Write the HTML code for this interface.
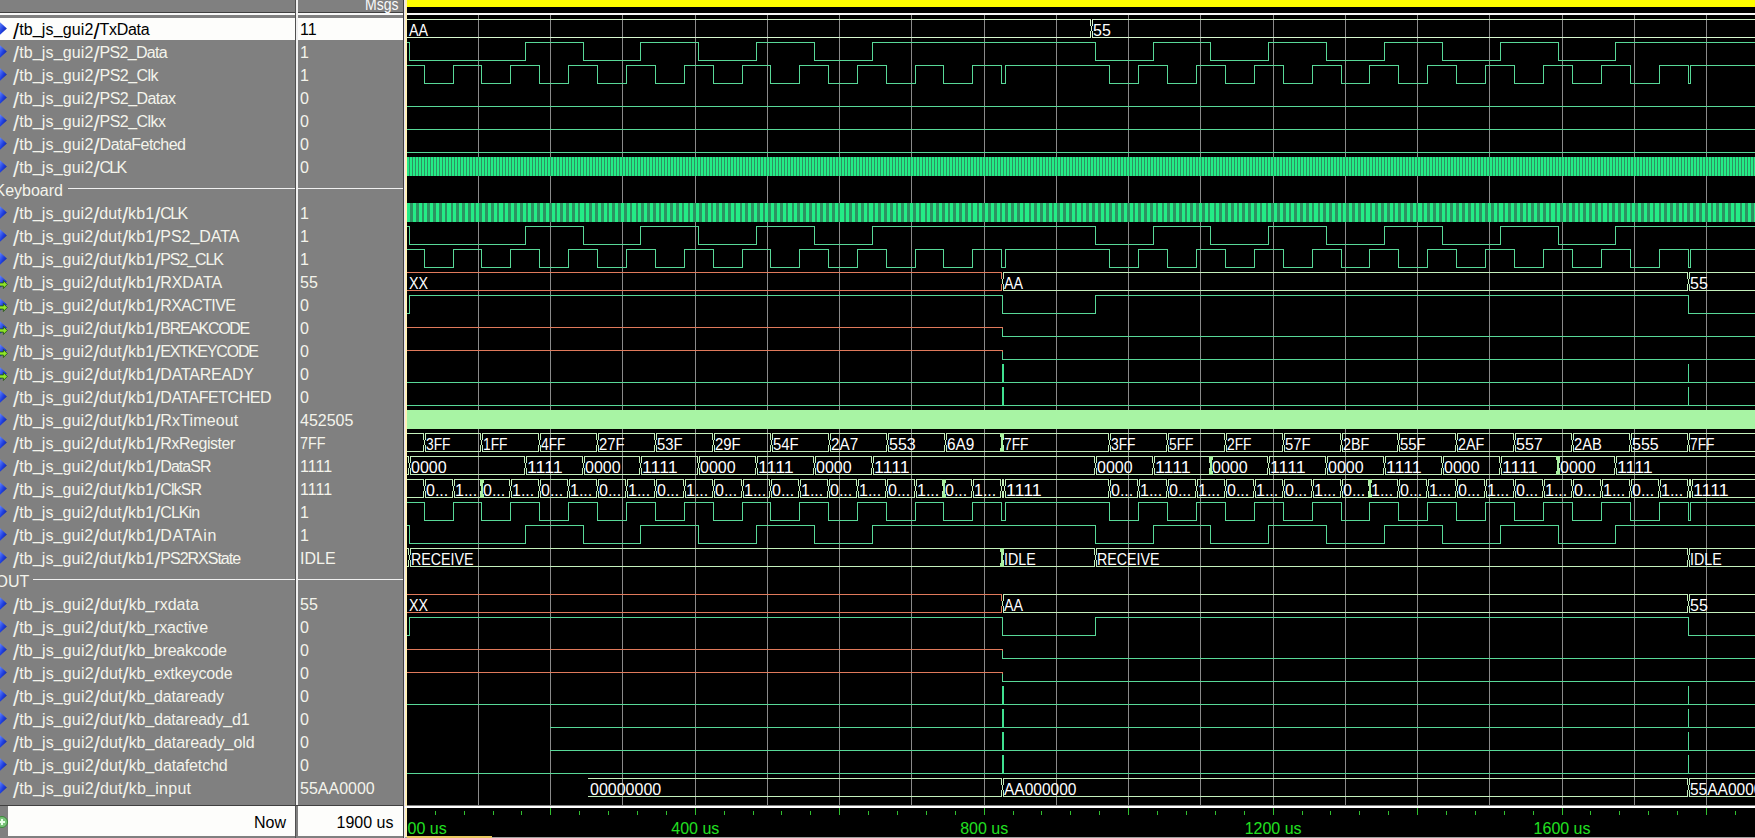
<!DOCTYPE html><html><head><meta charset="utf-8"><style>html,body{margin:0;padding:0;width:1755px;height:838px;overflow:hidden;background:#808080}svg{display:block}</style></head><body><svg width="1755" height="838" viewBox="0 0 1755 838" shape-rendering="crispEdges">
<defs>
<linearGradient id="dg" x1="0" y1="0" x2="1" y2="1"><stop offset="0" stop-color="#6a8cff"/><stop offset="0.5" stop-color="#1f3fe0"/><stop offset="1" stop-color="#0a1a80"/></linearGradient>
<pattern id="clk1" x="407" y="0" width="3" height="20" patternUnits="userSpaceOnUse"><rect width="3" height="20" fill="#2e9262"/><rect width="2" height="20" fill="#24ec86"/></pattern>
</defs>
<style>text{font-family:"Liberation Sans",sans-serif;font-size:16px}.nm{fill:#f4f4ec}.wl{fill:#ffffff}.vl{fill:#f4f4ec}</style>
<rect x="0" y="0" width="1755" height="838" fill="#808080"/>
<rect x="405" y="0" width="1350" height="805" fill="#000"/>
<rect x="405" y="806" width="1350" height="31" fill="#000"/>
<rect x="407" y="0" width="1348" height="7" fill="#ffff00"/>
<rect x="0" y="12" width="403" height="1" fill="#404040"/>
<rect x="0" y="13" width="1755" height="2" fill="#f8f8f8"/>
<text x="365" y="9.8" class="vl" style="fill:#fafafa" textLength="33.5" lengthAdjust="spacingAndGlyphs">Msgs</text>
<rect x="0" y="18" width="295" height="22" fill="#fdfdfb"/>
<rect x="298" y="18" width="105" height="22" fill="#fdfdfb"/>
<rect x="295" y="0" width="1" height="838" fill="#505050"/>
<rect x="296" y="0" width="2" height="805" fill="#f0f0f0"/>
<rect x="403" y="0" width="1" height="838" fill="#404040"/>
<rect x="404" y="0" width="1" height="838" fill="#e8e4f0"/>
<rect x="478" y="15" width="1" height="790" fill="#8a8a8a"/>
<rect x="550" y="15" width="1" height="790" fill="#8a8a8a"/>
<rect x="622" y="15" width="1" height="790" fill="#8a8a8a"/>
<rect x="695" y="15" width="1" height="790" fill="#8a8a8a"/>
<rect x="767" y="15" width="1" height="790" fill="#8a8a8a"/>
<rect x="839" y="15" width="1" height="790" fill="#8a8a8a"/>
<rect x="911" y="15" width="1" height="790" fill="#8a8a8a"/>
<rect x="984" y="15" width="1" height="790" fill="#8a8a8a"/>
<rect x="1056" y="15" width="1" height="790" fill="#8a8a8a"/>
<rect x="1128" y="15" width="1" height="790" fill="#8a8a8a"/>
<rect x="1200" y="15" width="1" height="790" fill="#8a8a8a"/>
<rect x="1273" y="15" width="1" height="790" fill="#8a8a8a"/>
<rect x="1345" y="15" width="1" height="790" fill="#8a8a8a"/>
<rect x="1417" y="15" width="1" height="790" fill="#8a8a8a"/>
<rect x="1489" y="15" width="1" height="790" fill="#8a8a8a"/>
<rect x="1562" y="15" width="1" height="790" fill="#8a8a8a"/>
<rect x="1634" y="15" width="1" height="790" fill="#8a8a8a"/>
<rect x="1706" y="15" width="1" height="790" fill="#8a8a8a"/>
<text x="13" y="34.8" class="nm" style="fill:#000" textLength="86.6" lengthAdjust="spacing"><tspan y="38.9" font-size="21.9">/</tspan><tspan y="34.8">tb</tspan><tspan y="33.8">_</tspan><tspan y="34.8">js</tspan><tspan y="33.8">_</tspan><tspan y="34.8">gui2</tspan><tspan y="38.9" font-size="21.9">/</tspan></text>
<text x="99.6" y="34.8" class="nm" style="fill:#000" textLength="50.0" lengthAdjust="spacing"><tspan y="34.8">TxData</tspan></text>
<text x="300" y="34.8" class="vl" style="fill:#000">11</text>
<path d="M-0.5 21.7L6.9 28.5L-0.5 35.3Z" fill="url(#dg)" shape-rendering="auto"/>
<text x="13" y="57.8" class="nm" style="fill:#f4f4ec" textLength="86.6" lengthAdjust="spacing"><tspan y="61.9" font-size="21.9">/</tspan><tspan y="57.8">tb</tspan><tspan y="56.8">_</tspan><tspan y="57.8">js</tspan><tspan y="56.8">_</tspan><tspan y="57.8">gui2</tspan><tspan y="61.9" font-size="21.9">/</tspan></text>
<text x="99.6" y="57.8" class="nm" style="fill:#f4f4ec" textLength="68.0" lengthAdjust="spacing"><tspan y="57.8">PS2</tspan><tspan y="56.8">_</tspan><tspan y="57.8">Data</tspan></text>
<text x="300" y="57.8" class="vl" style="fill:#f4f4ec">1</text>
<path d="M-0.5 44.7L6.9 51.5L-0.5 58.3Z" fill="url(#dg)" shape-rendering="auto"/>
<text x="13" y="80.8" class="nm" style="fill:#f4f4ec" textLength="86.6" lengthAdjust="spacing"><tspan y="84.89999999999999" font-size="21.9">/</tspan><tspan y="80.8">tb</tspan><tspan y="79.8">_</tspan><tspan y="80.8">js</tspan><tspan y="79.8">_</tspan><tspan y="80.8">gui2</tspan><tspan y="84.89999999999999" font-size="21.9">/</tspan></text>
<text x="99.6" y="80.8" class="nm" style="fill:#f4f4ec" textLength="58.9" lengthAdjust="spacing"><tspan y="80.8">PS2</tspan><tspan y="79.8">_</tspan><tspan y="80.8">Clk</tspan></text>
<text x="300" y="80.8" class="vl" style="fill:#f4f4ec">1</text>
<path d="M-0.5 67.7L6.9 74.5L-0.5 81.3Z" fill="url(#dg)" shape-rendering="auto"/>
<text x="13" y="103.8" class="nm" style="fill:#f4f4ec" textLength="86.6" lengthAdjust="spacing"><tspan y="107.89999999999999" font-size="21.9">/</tspan><tspan y="103.8">tb</tspan><tspan y="102.8">_</tspan><tspan y="103.8">js</tspan><tspan y="102.8">_</tspan><tspan y="103.8">gui2</tspan><tspan y="107.89999999999999" font-size="21.9">/</tspan></text>
<text x="99.6" y="103.8" class="nm" style="fill:#f4f4ec" textLength="76.4" lengthAdjust="spacing"><tspan y="103.8">PS2</tspan><tspan y="102.8">_</tspan><tspan y="103.8">Datax</tspan></text>
<text x="300" y="103.8" class="vl" style="fill:#f4f4ec">0</text>
<path d="M-0.5 90.7L6.9 97.5L-0.5 104.3Z" fill="url(#dg)" shape-rendering="auto"/>
<text x="13" y="126.8" class="nm" style="fill:#f4f4ec" textLength="86.6" lengthAdjust="spacing"><tspan y="130.9" font-size="21.9">/</tspan><tspan y="126.8">tb</tspan><tspan y="125.8">_</tspan><tspan y="126.8">js</tspan><tspan y="125.8">_</tspan><tspan y="126.8">gui2</tspan><tspan y="130.9" font-size="21.9">/</tspan></text>
<text x="99.6" y="126.8" class="nm" style="fill:#f4f4ec" textLength="66.4" lengthAdjust="spacing"><tspan y="126.8">PS2</tspan><tspan y="125.8">_</tspan><tspan y="126.8">Clkx</tspan></text>
<text x="300" y="126.8" class="vl" style="fill:#f4f4ec">0</text>
<path d="M-0.5 113.7L6.9 120.5L-0.5 127.3Z" fill="url(#dg)" shape-rendering="auto"/>
<text x="13" y="149.8" class="nm" style="fill:#f4f4ec" textLength="86.6" lengthAdjust="spacing"><tspan y="153.9" font-size="21.9">/</tspan><tspan y="149.8">tb</tspan><tspan y="148.8">_</tspan><tspan y="149.8">js</tspan><tspan y="148.8">_</tspan><tspan y="149.8">gui2</tspan><tspan y="153.9" font-size="21.9">/</tspan></text>
<text x="99.6" y="149.8" class="nm" style="fill:#f4f4ec" textLength="86.4" lengthAdjust="spacing"><tspan y="149.8">DataFetched</tspan></text>
<text x="300" y="149.8" class="vl" style="fill:#f4f4ec">0</text>
<path d="M-0.5 136.7L6.9 143.5L-0.5 150.3Z" fill="url(#dg)" shape-rendering="auto"/>
<text x="13" y="172.8" class="nm" style="fill:#f4f4ec" textLength="86.6" lengthAdjust="spacing"><tspan y="176.9" font-size="21.9">/</tspan><tspan y="172.8">tb</tspan><tspan y="171.8">_</tspan><tspan y="172.8">js</tspan><tspan y="171.8">_</tspan><tspan y="172.8">gui2</tspan><tspan y="176.9" font-size="21.9">/</tspan></text>
<text x="99.6" y="172.8" class="nm" style="fill:#f4f4ec" textLength="27.5" lengthAdjust="spacing"><tspan y="172.8">CLK</tspan></text>
<text x="300" y="172.8" class="vl" style="fill:#f4f4ec">0</text>
<path d="M-0.5 159.7L6.9 166.5L-0.5 173.3Z" fill="url(#dg)" shape-rendering="auto"/>
<text x="-5.5" y="195.5" class="nm">Keyboard</text>
<rect x="68" y="188" width="227" height="1" fill="#f0f0f0"/>
<rect x="298" y="188" width="105" height="1" fill="#f0f0f0"/>
<text x="13" y="218.8" class="nm" style="fill:#f4f4ec" textLength="147.3" lengthAdjust="spacing"><tspan y="222.9" font-size="21.9">/</tspan><tspan y="218.8">tb</tspan><tspan y="217.8">_</tspan><tspan y="218.8">js</tspan><tspan y="217.8">_</tspan><tspan y="218.8">gui2</tspan><tspan y="222.9" font-size="21.9">/</tspan><tspan y="218.8">dut</tspan><tspan y="222.9" font-size="21.9">/</tspan><tspan y="218.8">kb1</tspan><tspan y="222.9" font-size="21.9">/</tspan></text>
<text x="160.3" y="218.8" class="nm" style="fill:#f4f4ec" textLength="27.8" lengthAdjust="spacing"><tspan y="218.8">CLK</tspan></text>
<text x="300" y="218.8" class="vl" style="fill:#f4f4ec">1</text>
<path d="M-0.5 205.7L6.9 212.5L-0.5 219.3Z" fill="url(#dg)" shape-rendering="auto"/>
<text x="13" y="241.8" class="nm" style="fill:#f4f4ec" textLength="147.3" lengthAdjust="spacing"><tspan y="245.9" font-size="21.9">/</tspan><tspan y="241.8">tb</tspan><tspan y="240.8">_</tspan><tspan y="241.8">js</tspan><tspan y="240.8">_</tspan><tspan y="241.8">gui2</tspan><tspan y="245.9" font-size="21.9">/</tspan><tspan y="241.8">dut</tspan><tspan y="245.9" font-size="21.9">/</tspan><tspan y="241.8">kb1</tspan><tspan y="245.9" font-size="21.9">/</tspan></text>
<text x="160.3" y="241.8" class="nm" style="fill:#f4f4ec" textLength="79.1" lengthAdjust="spacing"><tspan y="241.8">PS2</tspan><tspan y="240.8">_</tspan><tspan y="241.8">DATA</tspan></text>
<text x="300" y="241.8" class="vl" style="fill:#f4f4ec">1</text>
<path d="M-0.5 228.7L6.9 235.5L-0.5 242.3Z" fill="url(#dg)" shape-rendering="auto"/>
<text x="13" y="264.8" class="nm" style="fill:#f4f4ec" textLength="147.3" lengthAdjust="spacing"><tspan y="268.90000000000003" font-size="21.9">/</tspan><tspan y="264.8">tb</tspan><tspan y="263.8">_</tspan><tspan y="264.8">js</tspan><tspan y="263.8">_</tspan><tspan y="264.8">gui2</tspan><tspan y="268.90000000000003" font-size="21.9">/</tspan><tspan y="264.8">dut</tspan><tspan y="268.90000000000003" font-size="21.9">/</tspan><tspan y="264.8">kb1</tspan><tspan y="268.90000000000003" font-size="21.9">/</tspan></text>
<text x="160.3" y="264.8" class="nm" style="fill:#f4f4ec" textLength="63.6" lengthAdjust="spacing"><tspan y="264.8">PS2</tspan><tspan y="263.8">_</tspan><tspan y="264.8">CLK</tspan></text>
<text x="300" y="264.8" class="vl" style="fill:#f4f4ec">1</text>
<path d="M-0.5 251.7L6.9 258.5L-0.5 265.3Z" fill="url(#dg)" shape-rendering="auto"/>
<text x="13" y="287.8" class="nm" style="fill:#f4f4ec" textLength="147.3" lengthAdjust="spacing"><tspan y="291.90000000000003" font-size="21.9">/</tspan><tspan y="287.8">tb</tspan><tspan y="286.8">_</tspan><tspan y="287.8">js</tspan><tspan y="286.8">_</tspan><tspan y="287.8">gui2</tspan><tspan y="291.90000000000003" font-size="21.9">/</tspan><tspan y="287.8">dut</tspan><tspan y="291.90000000000003" font-size="21.9">/</tspan><tspan y="287.8">kb1</tspan><tspan y="291.90000000000003" font-size="21.9">/</tspan></text>
<text x="160.3" y="287.8" class="nm" style="fill:#f4f4ec" textLength="61.8" lengthAdjust="spacing"><tspan y="287.8">RXDATA</tspan></text>
<text x="300" y="287.8" class="vl" style="fill:#f4f4ec">55</text>
<path d="M-0.5 274.7L6.9 281.5L-0.5 288.3Z" fill="url(#dg)" shape-rendering="auto"/>
<path d="M-1 282.9H3.4V280.5L7.3 284.5L3.4 288.5V286.1H-1Z" fill="#8ee428" stroke="#1d5010" stroke-width="0.8" shape-rendering="auto"/>
<text x="13" y="310.8" class="nm" style="fill:#f4f4ec" textLength="147.3" lengthAdjust="spacing"><tspan y="314.90000000000003" font-size="21.9">/</tspan><tspan y="310.8">tb</tspan><tspan y="309.8">_</tspan><tspan y="310.8">js</tspan><tspan y="309.8">_</tspan><tspan y="310.8">gui2</tspan><tspan y="314.90000000000003" font-size="21.9">/</tspan><tspan y="310.8">dut</tspan><tspan y="314.90000000000003" font-size="21.9">/</tspan><tspan y="310.8">kb1</tspan><tspan y="314.90000000000003" font-size="21.9">/</tspan></text>
<text x="160.3" y="310.8" class="nm" style="fill:#f4f4ec" textLength="75.6" lengthAdjust="spacing"><tspan y="310.8">RXACTIVE</tspan></text>
<text x="300" y="310.8" class="vl" style="fill:#f4f4ec">0</text>
<path d="M-0.5 297.7L6.9 304.5L-0.5 311.3Z" fill="url(#dg)" shape-rendering="auto"/>
<path d="M-1 305.9H3.4V303.5L7.3 307.5L3.4 311.5V309.1H-1Z" fill="#8ee428" stroke="#1d5010" stroke-width="0.8" shape-rendering="auto"/>
<text x="13" y="333.8" class="nm" style="fill:#f4f4ec" textLength="147.3" lengthAdjust="spacing"><tspan y="337.90000000000003" font-size="21.9">/</tspan><tspan y="333.8">tb</tspan><tspan y="332.8">_</tspan><tspan y="333.8">js</tspan><tspan y="332.8">_</tspan><tspan y="333.8">gui2</tspan><tspan y="337.90000000000003" font-size="21.9">/</tspan><tspan y="333.8">dut</tspan><tspan y="337.90000000000003" font-size="21.9">/</tspan><tspan y="333.8">kb1</tspan><tspan y="337.90000000000003" font-size="21.9">/</tspan></text>
<text x="160.3" y="333.8" class="nm" style="fill:#f4f4ec" textLength="89.9" lengthAdjust="spacing"><tspan y="333.8">BREAKCODE</tspan></text>
<text x="300" y="333.8" class="vl" style="fill:#f4f4ec">0</text>
<path d="M-0.5 320.7L6.9 327.5L-0.5 334.3Z" fill="url(#dg)" shape-rendering="auto"/>
<path d="M-1 328.9H3.4V326.5L7.3 330.5L3.4 334.5V332.1H-1Z" fill="#8ee428" stroke="#1d5010" stroke-width="0.8" shape-rendering="auto"/>
<text x="13" y="356.8" class="nm" style="fill:#f4f4ec" textLength="147.3" lengthAdjust="spacing"><tspan y="360.90000000000003" font-size="21.9">/</tspan><tspan y="356.8">tb</tspan><tspan y="355.8">_</tspan><tspan y="356.8">js</tspan><tspan y="355.8">_</tspan><tspan y="356.8">gui2</tspan><tspan y="360.90000000000003" font-size="21.9">/</tspan><tspan y="356.8">dut</tspan><tspan y="360.90000000000003" font-size="21.9">/</tspan><tspan y="356.8">kb1</tspan><tspan y="360.90000000000003" font-size="21.9">/</tspan></text>
<text x="160.3" y="356.8" class="nm" style="fill:#f4f4ec" textLength="98.7" lengthAdjust="spacing"><tspan y="356.8">EXTKEYCODE</tspan></text>
<text x="300" y="356.8" class="vl" style="fill:#f4f4ec">0</text>
<path d="M-0.5 343.7L6.9 350.5L-0.5 357.3Z" fill="url(#dg)" shape-rendering="auto"/>
<path d="M-1 351.9H3.4V349.5L7.3 353.5L3.4 357.5V355.1H-1Z" fill="#8ee428" stroke="#1d5010" stroke-width="0.8" shape-rendering="auto"/>
<text x="13" y="379.8" class="nm" style="fill:#f4f4ec" textLength="147.3" lengthAdjust="spacing"><tspan y="383.90000000000003" font-size="21.9">/</tspan><tspan y="379.8">tb</tspan><tspan y="378.8">_</tspan><tspan y="379.8">js</tspan><tspan y="378.8">_</tspan><tspan y="379.8">gui2</tspan><tspan y="383.90000000000003" font-size="21.9">/</tspan><tspan y="379.8">dut</tspan><tspan y="383.90000000000003" font-size="21.9">/</tspan><tspan y="379.8">kb1</tspan><tspan y="383.90000000000003" font-size="21.9">/</tspan></text>
<text x="160.3" y="379.8" class="nm" style="fill:#f4f4ec" textLength="93.7" lengthAdjust="spacing"><tspan y="379.8">DATAREADY</tspan></text>
<text x="300" y="379.8" class="vl" style="fill:#f4f4ec">0</text>
<path d="M-0.5 366.7L6.9 373.5L-0.5 380.3Z" fill="url(#dg)" shape-rendering="auto"/>
<path d="M-1 374.9H3.4V372.5L7.3 376.5L3.4 380.5V378.1H-1Z" fill="#8ee428" stroke="#1d5010" stroke-width="0.8" shape-rendering="auto"/>
<text x="13" y="402.8" class="nm" style="fill:#f4f4ec" textLength="147.3" lengthAdjust="spacing"><tspan y="406.90000000000003" font-size="21.9">/</tspan><tspan y="402.8">tb</tspan><tspan y="401.8">_</tspan><tspan y="402.8">js</tspan><tspan y="401.8">_</tspan><tspan y="402.8">gui2</tspan><tspan y="406.90000000000003" font-size="21.9">/</tspan><tspan y="402.8">dut</tspan><tspan y="406.90000000000003" font-size="21.9">/</tspan><tspan y="402.8">kb1</tspan><tspan y="406.90000000000003" font-size="21.9">/</tspan></text>
<text x="160.3" y="402.8" class="nm" style="fill:#f4f4ec" textLength="111.2" lengthAdjust="spacing"><tspan y="402.8">DATAFETCHED</tspan></text>
<text x="300" y="402.8" class="vl" style="fill:#f4f4ec">0</text>
<path d="M-0.5 389.7L6.9 396.5L-0.5 403.3Z" fill="url(#dg)" shape-rendering="auto"/>
<text x="13" y="425.8" class="nm" style="fill:#f4f4ec" textLength="147.3" lengthAdjust="spacing"><tspan y="429.90000000000003" font-size="21.9">/</tspan><tspan y="425.8">tb</tspan><tspan y="424.8">_</tspan><tspan y="425.8">js</tspan><tspan y="424.8">_</tspan><tspan y="425.8">gui2</tspan><tspan y="429.90000000000003" font-size="21.9">/</tspan><tspan y="425.8">dut</tspan><tspan y="429.90000000000003" font-size="21.9">/</tspan><tspan y="425.8">kb1</tspan><tspan y="429.90000000000003" font-size="21.9">/</tspan></text>
<text x="160.3" y="425.8" class="nm" style="fill:#f4f4ec" textLength="78.0" lengthAdjust="spacing"><tspan y="425.8">RxTimeout</tspan></text>
<text x="300" y="425.8" class="vl" style="fill:#f4f4ec">452505</text>
<path d="M-0.5 412.7L6.9 419.5L-0.5 426.3Z" fill="url(#dg)" shape-rendering="auto"/>
<text x="13" y="448.8" class="nm" style="fill:#f4f4ec" textLength="147.3" lengthAdjust="spacing"><tspan y="452.90000000000003" font-size="21.9">/</tspan><tspan y="448.8">tb</tspan><tspan y="447.8">_</tspan><tspan y="448.8">js</tspan><tspan y="447.8">_</tspan><tspan y="448.8">gui2</tspan><tspan y="452.90000000000003" font-size="21.9">/</tspan><tspan y="448.8">dut</tspan><tspan y="452.90000000000003" font-size="21.9">/</tspan><tspan y="448.8">kb1</tspan><tspan y="452.90000000000003" font-size="21.9">/</tspan></text>
<text x="160.3" y="448.8" class="nm" style="fill:#f4f4ec" textLength="75.1" lengthAdjust="spacing"><tspan y="448.8">RxRegister</tspan></text>
<text x="300" y="448.8" class="vl" style="fill:#f4f4ec" textLength="25.5" lengthAdjust="spacingAndGlyphs">7FF</text>
<path d="M-0.5 435.7L6.9 442.5L-0.5 449.3Z" fill="url(#dg)" shape-rendering="auto"/>
<text x="13" y="471.8" class="nm" style="fill:#f4f4ec" textLength="147.3" lengthAdjust="spacing"><tspan y="475.90000000000003" font-size="21.9">/</tspan><tspan y="471.8">tb</tspan><tspan y="470.8">_</tspan><tspan y="471.8">js</tspan><tspan y="470.8">_</tspan><tspan y="471.8">gui2</tspan><tspan y="475.90000000000003" font-size="21.9">/</tspan><tspan y="471.8">dut</tspan><tspan y="475.90000000000003" font-size="21.9">/</tspan><tspan y="471.8">kb1</tspan><tspan y="475.90000000000003" font-size="21.9">/</tspan></text>
<text x="160.3" y="471.8" class="nm" style="fill:#f4f4ec" textLength="51.3" lengthAdjust="spacing"><tspan y="471.8">DataSR</tspan></text>
<text x="300" y="471.8" class="vl" style="fill:#f4f4ec">1111</text>
<path d="M-0.5 458.7L6.9 465.5L-0.5 472.3Z" fill="url(#dg)" shape-rendering="auto"/>
<text x="13" y="494.8" class="nm" style="fill:#f4f4ec" textLength="147.3" lengthAdjust="spacing"><tspan y="498.90000000000003" font-size="21.9">/</tspan><tspan y="494.8">tb</tspan><tspan y="493.8">_</tspan><tspan y="494.8">js</tspan><tspan y="493.8">_</tspan><tspan y="494.8">gui2</tspan><tspan y="498.90000000000003" font-size="21.9">/</tspan><tspan y="494.8">dut</tspan><tspan y="498.90000000000003" font-size="21.9">/</tspan><tspan y="494.8">kb1</tspan><tspan y="498.90000000000003" font-size="21.9">/</tspan></text>
<text x="160.3" y="494.8" class="nm" style="fill:#f4f4ec" textLength="41.7" lengthAdjust="spacing"><tspan y="494.8">ClkSR</tspan></text>
<text x="300" y="494.8" class="vl" style="fill:#f4f4ec">1111</text>
<path d="M-0.5 481.7L6.9 488.5L-0.5 495.3Z" fill="url(#dg)" shape-rendering="auto"/>
<text x="13" y="517.8" class="nm" style="fill:#f4f4ec" textLength="147.3" lengthAdjust="spacing"><tspan y="521.9" font-size="21.9">/</tspan><tspan y="517.8">tb</tspan><tspan y="516.8">_</tspan><tspan y="517.8">js</tspan><tspan y="516.8">_</tspan><tspan y="517.8">gui2</tspan><tspan y="521.9" font-size="21.9">/</tspan><tspan y="517.8">dut</tspan><tspan y="521.9" font-size="21.9">/</tspan><tspan y="517.8">kb1</tspan><tspan y="521.9" font-size="21.9">/</tspan></text>
<text x="160.3" y="517.8" class="nm" style="fill:#f4f4ec" textLength="39.8" lengthAdjust="spacing"><tspan y="517.8">CLKin</tspan></text>
<text x="300" y="517.8" class="vl" style="fill:#f4f4ec">1</text>
<path d="M-0.5 504.7L6.9 511.5L-0.5 518.3Z" fill="url(#dg)" shape-rendering="auto"/>
<text x="13" y="540.8" class="nm" style="fill:#f4f4ec" textLength="147.3" lengthAdjust="spacing"><tspan y="544.9" font-size="21.9">/</tspan><tspan y="540.8">tb</tspan><tspan y="539.8">_</tspan><tspan y="540.8">js</tspan><tspan y="539.8">_</tspan><tspan y="540.8">gui2</tspan><tspan y="544.9" font-size="21.9">/</tspan><tspan y="540.8">dut</tspan><tspan y="544.9" font-size="21.9">/</tspan><tspan y="540.8">kb1</tspan><tspan y="544.9" font-size="21.9">/</tspan></text>
<text x="160.3" y="540.8" class="nm" style="fill:#f4f4ec" textLength="56.0" lengthAdjust="spacing"><tspan y="540.8">DATAin</tspan></text>
<text x="300" y="540.8" class="vl" style="fill:#f4f4ec">1</text>
<path d="M-0.5 527.7L6.9 534.5L-0.5 541.3Z" fill="url(#dg)" shape-rendering="auto"/>
<text x="13" y="563.8" class="nm" style="fill:#f4f4ec" textLength="147.3" lengthAdjust="spacing"><tspan y="567.9" font-size="21.9">/</tspan><tspan y="563.8">tb</tspan><tspan y="562.8">_</tspan><tspan y="563.8">js</tspan><tspan y="562.8">_</tspan><tspan y="563.8">gui2</tspan><tspan y="567.9" font-size="21.9">/</tspan><tspan y="563.8">dut</tspan><tspan y="567.9" font-size="21.9">/</tspan><tspan y="563.8">kb1</tspan><tspan y="567.9" font-size="21.9">/</tspan></text>
<text x="160.3" y="563.8" class="nm" style="fill:#f4f4ec" textLength="80.8" lengthAdjust="spacing"><tspan y="563.8">PS2RXState</tspan></text>
<text x="300" y="563.8" class="vl" style="fill:#f4f4ec">IDLE</text>
<path d="M-0.5 550.7L6.9 557.5L-0.5 564.3Z" fill="url(#dg)" shape-rendering="auto"/>
<text x="-4.5" y="586.5" class="nm">OUT</text>
<rect x="33" y="579" width="262" height="1" fill="#f0f0f0"/>
<rect x="298" y="579" width="105" height="1" fill="#f0f0f0"/>
<text x="13" y="609.8" class="nm" style="fill:#f4f4ec" textLength="115.7" lengthAdjust="spacing"><tspan y="613.9" font-size="21.9">/</tspan><tspan y="609.8">tb</tspan><tspan y="608.8">_</tspan><tspan y="609.8">js</tspan><tspan y="608.8">_</tspan><tspan y="609.8">gui2</tspan><tspan y="613.9" font-size="21.9">/</tspan><tspan y="609.8">dut</tspan><tspan y="613.9" font-size="21.9">/</tspan></text>
<text x="128.7" y="609.8" class="nm" style="fill:#f4f4ec" textLength="70.1" lengthAdjust="spacing"><tspan y="609.8">kb</tspan><tspan y="608.8">_</tspan><tspan y="609.8">rxdata</tspan></text>
<text x="300" y="609.8" class="vl" style="fill:#f4f4ec">55</text>
<path d="M-0.5 596.7L6.9 603.5L-0.5 610.3Z" fill="url(#dg)" shape-rendering="auto"/>
<text x="13" y="632.8" class="nm" style="fill:#f4f4ec" textLength="115.7" lengthAdjust="spacing"><tspan y="636.9" font-size="21.9">/</tspan><tspan y="632.8">tb</tspan><tspan y="631.8">_</tspan><tspan y="632.8">js</tspan><tspan y="631.8">_</tspan><tspan y="632.8">gui2</tspan><tspan y="636.9" font-size="21.9">/</tspan><tspan y="632.8">dut</tspan><tspan y="636.9" font-size="21.9">/</tspan></text>
<text x="128.7" y="632.8" class="nm" style="fill:#f4f4ec" textLength="79.4" lengthAdjust="spacing"><tspan y="632.8">kb</tspan><tspan y="631.8">_</tspan><tspan y="632.8">rxactive</tspan></text>
<text x="300" y="632.8" class="vl" style="fill:#f4f4ec">0</text>
<path d="M-0.5 619.7L6.9 626.5L-0.5 633.3Z" fill="url(#dg)" shape-rendering="auto"/>
<text x="13" y="655.8" class="nm" style="fill:#f4f4ec" textLength="115.7" lengthAdjust="spacing"><tspan y="659.9" font-size="21.9">/</tspan><tspan y="655.8">tb</tspan><tspan y="654.8">_</tspan><tspan y="655.8">js</tspan><tspan y="654.8">_</tspan><tspan y="655.8">gui2</tspan><tspan y="659.9" font-size="21.9">/</tspan><tspan y="655.8">dut</tspan><tspan y="659.9" font-size="21.9">/</tspan></text>
<text x="128.7" y="655.8" class="nm" style="fill:#f4f4ec" textLength="98.2" lengthAdjust="spacing"><tspan y="655.8">kb</tspan><tspan y="654.8">_</tspan><tspan y="655.8">breakcode</tspan></text>
<text x="300" y="655.8" class="vl" style="fill:#f4f4ec">0</text>
<path d="M-0.5 642.7L6.9 649.5L-0.5 656.3Z" fill="url(#dg)" shape-rendering="auto"/>
<text x="13" y="678.8" class="nm" style="fill:#f4f4ec" textLength="115.7" lengthAdjust="spacing"><tspan y="682.9" font-size="21.9">/</tspan><tspan y="678.8">tb</tspan><tspan y="677.8">_</tspan><tspan y="678.8">js</tspan><tspan y="677.8">_</tspan><tspan y="678.8">gui2</tspan><tspan y="682.9" font-size="21.9">/</tspan><tspan y="678.8">dut</tspan><tspan y="682.9" font-size="21.9">/</tspan></text>
<text x="128.7" y="678.8" class="nm" style="fill:#f4f4ec" textLength="103.9" lengthAdjust="spacing"><tspan y="678.8">kb</tspan><tspan y="677.8">_</tspan><tspan y="678.8">extkeycode</tspan></text>
<text x="300" y="678.8" class="vl" style="fill:#f4f4ec">0</text>
<path d="M-0.5 665.7L6.9 672.5L-0.5 679.3Z" fill="url(#dg)" shape-rendering="auto"/>
<text x="13" y="701.8" class="nm" style="fill:#f4f4ec" textLength="115.7" lengthAdjust="spacing"><tspan y="705.9" font-size="21.9">/</tspan><tspan y="701.8">tb</tspan><tspan y="700.8">_</tspan><tspan y="701.8">js</tspan><tspan y="700.8">_</tspan><tspan y="701.8">gui2</tspan><tspan y="705.9" font-size="21.9">/</tspan><tspan y="701.8">dut</tspan><tspan y="705.9" font-size="21.9">/</tspan></text>
<text x="128.7" y="701.8" class="nm" style="fill:#f4f4ec" textLength="95.3" lengthAdjust="spacing"><tspan y="701.8">kb</tspan><tspan y="700.8">_</tspan><tspan y="701.8">dataready</tspan></text>
<text x="300" y="701.8" class="vl" style="fill:#f4f4ec">0</text>
<path d="M-0.5 688.7L6.9 695.5L-0.5 702.3Z" fill="url(#dg)" shape-rendering="auto"/>
<text x="13" y="724.8" class="nm" style="fill:#f4f4ec" textLength="115.7" lengthAdjust="spacing"><tspan y="728.9" font-size="21.9">/</tspan><tspan y="724.8">tb</tspan><tspan y="723.8">_</tspan><tspan y="724.8">js</tspan><tspan y="723.8">_</tspan><tspan y="724.8">gui2</tspan><tspan y="728.9" font-size="21.9">/</tspan><tspan y="724.8">dut</tspan><tspan y="728.9" font-size="21.9">/</tspan></text>
<text x="128.7" y="724.8" class="nm" style="fill:#f4f4ec" textLength="121.0" lengthAdjust="spacing"><tspan y="724.8">kb</tspan><tspan y="723.8">_</tspan><tspan y="724.8">dataready</tspan><tspan y="723.8">_</tspan><tspan y="724.8">d1</tspan></text>
<text x="300" y="724.8" class="vl" style="fill:#f4f4ec">0</text>
<path d="M-0.5 711.7L6.9 718.5L-0.5 725.3Z" fill="url(#dg)" shape-rendering="auto"/>
<text x="13" y="747.8" class="nm" style="fill:#f4f4ec" textLength="115.7" lengthAdjust="spacing"><tspan y="751.9" font-size="21.9">/</tspan><tspan y="747.8">tb</tspan><tspan y="746.8">_</tspan><tspan y="747.8">js</tspan><tspan y="746.8">_</tspan><tspan y="747.8">gui2</tspan><tspan y="751.9" font-size="21.9">/</tspan><tspan y="747.8">dut</tspan><tspan y="751.9" font-size="21.9">/</tspan></text>
<text x="128.7" y="747.8" class="nm" style="fill:#f4f4ec" textLength="125.9" lengthAdjust="spacing"><tspan y="747.8">kb</tspan><tspan y="746.8">_</tspan><tspan y="747.8">dataready</tspan><tspan y="746.8">_</tspan><tspan y="747.8">old</tspan></text>
<text x="300" y="747.8" class="vl" style="fill:#f4f4ec">0</text>
<path d="M-0.5 734.7L6.9 741.5L-0.5 748.3Z" fill="url(#dg)" shape-rendering="auto"/>
<text x="13" y="770.8" class="nm" style="fill:#f4f4ec" textLength="115.7" lengthAdjust="spacing"><tspan y="774.9" font-size="21.9">/</tspan><tspan y="770.8">tb</tspan><tspan y="769.8">_</tspan><tspan y="770.8">js</tspan><tspan y="769.8">_</tspan><tspan y="770.8">gui2</tspan><tspan y="774.9" font-size="21.9">/</tspan><tspan y="770.8">dut</tspan><tspan y="774.9" font-size="21.9">/</tspan></text>
<text x="128.7" y="770.8" class="nm" style="fill:#f4f4ec" textLength="99.0" lengthAdjust="spacing"><tspan y="770.8">kb</tspan><tspan y="769.8">_</tspan><tspan y="770.8">datafetchd</tspan></text>
<text x="300" y="770.8" class="vl" style="fill:#f4f4ec">0</text>
<path d="M-0.5 757.7L6.9 764.5L-0.5 771.3Z" fill="url(#dg)" shape-rendering="auto"/>
<text x="13" y="793.8" class="nm" style="fill:#f4f4ec" textLength="115.7" lengthAdjust="spacing"><tspan y="797.9" font-size="21.9">/</tspan><tspan y="793.8">tb</tspan><tspan y="792.8">_</tspan><tspan y="793.8">js</tspan><tspan y="792.8">_</tspan><tspan y="793.8">gui2</tspan><tspan y="797.9" font-size="21.9">/</tspan><tspan y="793.8">dut</tspan><tspan y="797.9" font-size="21.9">/</tspan></text>
<text x="128.7" y="793.8" class="nm" style="fill:#f4f4ec" textLength="62.3" lengthAdjust="spacing"><tspan y="793.8">kb</tspan><tspan y="792.8">_</tspan><tspan y="793.8">input</tspan></text>
<text x="300" y="793.8" class="vl" style="fill:#f4f4ec">55AA0000</text>
<path d="M-0.5 780.7L6.9 787.5L-0.5 794.3Z" fill="url(#dg)" shape-rendering="auto"/>
<path d="M407 19.5H1090.5V24L1091.5 28.5" stroke="#d8f8d0" fill="none"/><path d="M407 37.5H1090.5V33L1091.5 28.5" stroke="#d8f8d0" fill="none"/><text x="409" y="36" class="wl" textLength="19.00" lengthAdjust="spacingAndGlyphs">AA</text><path d="M1091.5 28.5L1092.5 24V19.5H1755" stroke="#d8f8d0" fill="none"/><path d="M1091.5 28.5L1092.5 33V37.5H1755" stroke="#d8f8d0" fill="none"/><text x="1093" y="36" class="wl" textLength="17.80" lengthAdjust="spacingAndGlyphs">55</text>
<path d="M407 42.5H409.5V60.5H525.5V42.5H583.5V60.5H640.5V42.5H698.5V60.5H756.5V42.5H814.5V60.5H872.5V42.5H1095.5V60.5H1153.5V42.5H1210.5V60.5H1268.5V42.5H1326.5V60.5H1384.5V42.5H1442.5V60.5H1500.5V42.5H1558.5V60.5H1615.5V42.5H1755" stroke="#58d898" fill="none" stroke-width="1"/>
<path d="M407 65.5H424.5V83.5H453.5V65.5H481.5V83.5H510.5V65.5H539.5V83.5H568.5V65.5H597.5V83.5H626.5V65.5H655.5V83.5H684.5V65.5H713.5V83.5H742.5V65.5H770.5V83.5H799.5V65.5H828.5V83.5H857.5V65.5H886.5V83.5H915.5V65.5H943.5V83.5H972.5V65.5H1001.5V83.5H1005.5V65.5H1109.5V83.5H1138.5V65.5H1167.5V83.5H1196.5V65.5H1225.5V83.5H1254.5V65.5H1283.5V83.5H1312.5V65.5H1341.5V83.5H1369.5V65.5H1398.5V83.5H1427.5V65.5H1456.5V83.5H1485.5V65.5H1514.5V83.5H1543.5V65.5H1572.5V83.5H1601.5V65.5H1630.5V83.5H1659.5V65.5H1688.5V83.5H1690.5V65.5H1755" stroke="#58d898" fill="none" stroke-width="1"/>
<path d="M407 106.5H1755" stroke="#58d898" stroke-width="1"/>
<path d="M407 129.5H1755" stroke="#58d898" stroke-width="1"/>
<path d="M407 152.5H1755" stroke="#58d898" stroke-width="1"/>
<rect x="407" y="157" width="1348" height="19" fill="url(#clk1)"/>
<rect x="407" y="203" width="1348" height="19" fill="#2e9262"/><path d="M407 203h3v19h-3ZM413 203h3v19h-3ZM419 203h3v19h-3ZM424 203h3v19h-3ZM430 203h3v19h-3ZM436 203h3v19h-3ZM442 203h3v19h-3ZM447 203h4v19h-4ZM453 203h3v19h-3ZM459 203h3v19h-3ZM465 203h3v19h-3ZM471 203h3v19h-3ZM476 203h3v19h-3ZM482 203h3v19h-3ZM488 203h3v19h-3ZM494 203h3v19h-3ZM499 203h4v19h-4ZM505 203h3v19h-3ZM511 203h3v19h-3ZM517 203h3v19h-3ZM523 203h3v19h-3ZM528 203h3v19h-3ZM534 203h3v19h-3ZM540 203h3v19h-3ZM546 203h3v19h-3ZM552 203h3v19h-3ZM557 203h3v19h-3ZM563 203h3v19h-3ZM569 203h3v19h-3ZM575 203h3v19h-3ZM580 203h4v19h-4ZM586 203h3v19h-3ZM592 203h3v19h-3ZM598 203h3v19h-3ZM604 203h3v19h-3ZM609 203h3v19h-3ZM615 203h3v19h-3ZM621 203h3v19h-3ZM627 203h3v19h-3ZM632 203h4v19h-4ZM638 203h3v19h-3ZM644 203h3v19h-3ZM650 203h3v19h-3ZM656 203h3v19h-3ZM661 203h3v19h-3ZM667 203h3v19h-3ZM673 203h3v19h-3ZM679 203h3v19h-3ZM684 203h4v19h-4ZM690 203h3v19h-3ZM696 203h3v19h-3ZM702 203h3v19h-3ZM708 203h3v19h-3ZM713 203h3v19h-3ZM719 203h3v19h-3ZM725 203h3v19h-3ZM731 203h3v19h-3ZM736 203h4v19h-4ZM742 203h3v19h-3ZM748 203h3v19h-3ZM754 203h3v19h-3ZM760 203h3v19h-3ZM765 203h3v19h-3ZM771 203h3v19h-3ZM777 203h3v19h-3ZM783 203h3v19h-3ZM788 203h4v19h-4ZM794 203h3v19h-3ZM800 203h3v19h-3ZM806 203h3v19h-3ZM812 203h3v19h-3ZM817 203h3v19h-3ZM823 203h3v19h-3ZM829 203h3v19h-3ZM835 203h3v19h-3ZM840 203h4v19h-4ZM846 203h3v19h-3ZM852 203h3v19h-3ZM858 203h3v19h-3ZM864 203h3v19h-3ZM869 203h4v19h-4ZM875 203h3v19h-3ZM881 203h3v19h-3ZM887 203h3v19h-3ZM893 203h3v19h-3ZM898 203h3v19h-3ZM904 203h3v19h-3ZM910 203h3v19h-3ZM916 203h3v19h-3ZM921 203h4v19h-4ZM927 203h3v19h-3ZM933 203h3v19h-3ZM939 203h3v19h-3ZM945 203h3v19h-3ZM950 203h3v19h-3ZM956 203h3v19h-3ZM962 203h3v19h-3ZM968 203h3v19h-3ZM973 203h4v19h-4ZM979 203h3v19h-3ZM985 203h3v19h-3ZM991 203h3v19h-3ZM997 203h3v19h-3ZM1002 203h3v19h-3ZM1008 203h3v19h-3ZM1014 203h3v19h-3ZM1020 203h3v19h-3ZM1025 203h4v19h-4ZM1031 203h3v19h-3ZM1037 203h3v19h-3ZM1043 203h3v19h-3ZM1049 203h3v19h-3ZM1054 203h3v19h-3ZM1060 203h3v19h-3ZM1066 203h3v19h-3ZM1072 203h3v19h-3ZM1077 203h4v19h-4ZM1083 203h3v19h-3ZM1089 203h3v19h-3ZM1095 203h3v19h-3ZM1101 203h3v19h-3ZM1106 203h3v19h-3ZM1112 203h3v19h-3ZM1118 203h3v19h-3ZM1124 203h3v19h-3ZM1130 203h3v19h-3ZM1135 203h3v19h-3ZM1141 203h3v19h-3ZM1147 203h3v19h-3ZM1153 203h3v19h-3ZM1158 203h4v19h-4ZM1164 203h3v19h-3ZM1170 203h3v19h-3ZM1176 203h3v19h-3ZM1182 203h3v19h-3ZM1187 203h3v19h-3ZM1193 203h3v19h-3ZM1199 203h3v19h-3ZM1205 203h3v19h-3ZM1210 203h4v19h-4ZM1216 203h3v19h-3ZM1222 203h3v19h-3ZM1228 203h3v19h-3ZM1234 203h3v19h-3ZM1239 203h3v19h-3ZM1245 203h3v19h-3ZM1251 203h3v19h-3ZM1257 203h3v19h-3ZM1262 203h4v19h-4ZM1268 203h3v19h-3ZM1274 203h3v19h-3ZM1280 203h3v19h-3ZM1286 203h3v19h-3ZM1291 203h3v19h-3ZM1297 203h3v19h-3ZM1303 203h3v19h-3ZM1309 203h3v19h-3ZM1314 203h4v19h-4ZM1320 203h3v19h-3ZM1326 203h3v19h-3ZM1332 203h3v19h-3ZM1338 203h3v19h-3ZM1343 203h3v19h-3ZM1349 203h3v19h-3ZM1355 203h3v19h-3ZM1361 203h3v19h-3ZM1366 203h4v19h-4ZM1372 203h3v19h-3ZM1378 203h3v19h-3ZM1384 203h3v19h-3ZM1390 203h3v19h-3ZM1395 203h3v19h-3ZM1401 203h3v19h-3ZM1407 203h3v19h-3ZM1413 203h3v19h-3ZM1418 203h4v19h-4ZM1424 203h3v19h-3ZM1430 203h3v19h-3ZM1436 203h3v19h-3ZM1442 203h3v19h-3ZM1447 203h3v19h-3ZM1453 203h3v19h-3ZM1459 203h3v19h-3ZM1465 203h3v19h-3ZM1471 203h3v19h-3ZM1476 203h3v19h-3ZM1482 203h3v19h-3ZM1488 203h3v19h-3ZM1494 203h3v19h-3ZM1499 203h4v19h-4ZM1505 203h3v19h-3ZM1511 203h3v19h-3ZM1517 203h3v19h-3ZM1523 203h3v19h-3ZM1528 203h3v19h-3ZM1534 203h3v19h-3ZM1540 203h3v19h-3ZM1546 203h3v19h-3ZM1551 203h4v19h-4ZM1557 203h3v19h-3ZM1563 203h3v19h-3ZM1569 203h3v19h-3ZM1575 203h3v19h-3ZM1580 203h3v19h-3ZM1586 203h3v19h-3ZM1592 203h3v19h-3ZM1598 203h3v19h-3ZM1603 203h4v19h-4ZM1609 203h3v19h-3ZM1615 203h3v19h-3ZM1621 203h3v19h-3ZM1627 203h3v19h-3ZM1632 203h3v19h-3ZM1638 203h3v19h-3ZM1644 203h3v19h-3ZM1650 203h3v19h-3ZM1655 203h4v19h-4ZM1661 203h3v19h-3ZM1667 203h3v19h-3ZM1673 203h3v19h-3ZM1679 203h3v19h-3ZM1684 203h3v19h-3ZM1690 203h3v19h-3ZM1696 203h3v19h-3ZM1702 203h3v19h-3ZM1708 203h3v19h-3ZM1713 203h3v19h-3ZM1719 203h3v19h-3ZM1725 203h3v19h-3ZM1731 203h3v19h-3ZM1736 203h4v19h-4ZM1742 203h3v19h-3ZM1748 203h3v19h-3ZM1754 203h3v19h-3Z" fill="#24ec86"/>
<path d="M407 226.5H409.5V244.5H525.5V226.5H583.5V244.5H640.5V226.5H698.5V244.5H756.5V226.5H814.5V244.5H872.5V226.5H1095.5V244.5H1153.5V226.5H1210.5V244.5H1268.5V226.5H1326.5V244.5H1384.5V226.5H1442.5V244.5H1500.5V226.5H1558.5V244.5H1615.5V226.5H1755" stroke="#58d898" fill="none" stroke-width="1"/>
<path d="M407 249.5H424.5V267.5H453.5V249.5H481.5V267.5H510.5V249.5H539.5V267.5H568.5V249.5H597.5V267.5H626.5V249.5H655.5V267.5H684.5V249.5H713.5V267.5H742.5V249.5H770.5V267.5H799.5V249.5H828.5V267.5H857.5V249.5H886.5V267.5H915.5V249.5H943.5V267.5H972.5V249.5H1001.5V267.5H1005.5V249.5H1109.5V267.5H1138.5V249.5H1167.5V267.5H1196.5V249.5H1225.5V267.5H1254.5V249.5H1283.5V267.5H1312.5V249.5H1341.5V267.5H1369.5V249.5H1398.5V267.5H1427.5V249.5H1456.5V267.5H1485.5V249.5H1514.5V267.5H1543.5V249.5H1572.5V267.5H1601.5V249.5H1630.5V267.5H1659.5V249.5H1688.5V267.5H1690.5V249.5H1755" stroke="#58d898" fill="none" stroke-width="1"/>
<path d="M407 272.5H1001.5V277L1002.5 281.5" stroke="#e07a5c" fill="none"/><path d="M407 290.5H1001.5V286L1002.5 281.5" stroke="#e07a5c" fill="none"/><text x="409" y="289" class="wl" textLength="19.00" lengthAdjust="spacingAndGlyphs">XX</text><path d="M1002.5 281.5L1003.5 277V272.5H1687.5V277L1688.5 281.5" stroke="#c4f0bc" fill="none"/><path d="M1002.5 281.5L1003.5 286V290.5H1687.5V286L1688.5 281.5" stroke="#c4f0bc" fill="none"/><text x="1004" y="289" class="wl" textLength="19.00" lengthAdjust="spacingAndGlyphs">AA</text><path d="M1688.5 281.5L1689.5 277V272.5H1755" stroke="#c4f0bc" fill="none"/><path d="M1688.5 281.5L1689.5 286V290.5H1755" stroke="#c4f0bc" fill="none"/><text x="1690" y="289" class="wl" textLength="17.80" lengthAdjust="spacingAndGlyphs">55</text>
<path d="M407 313.5H409.5V295.5H1002.5V313.5H1095.5V295.5H1688.5V313.5H1755" stroke="#58d898" fill="none" stroke-width="1"/>
<path d="M407 327.5H1002.5V336.5H1755" stroke="#e07a5c" fill="none"/><path d="M1002.5 329V336.5H1755" stroke="#58d898" fill="none"/>
<path d="M407 350.5H1002.5V359.5H1755" stroke="#e07a5c" fill="none"/><path d="M1002.5 352V359.5H1755" stroke="#58d898" fill="none"/>
<path d="M407 382.5H1755" stroke="#58d898" stroke-width="1"/><rect x="1002" y="364" width="2" height="19" fill="#40e090"/><rect x="1688" y="364" width="1" height="19" fill="#50d898"/>
<path d="M407 405.5H1755" stroke="#58d898" stroke-width="1"/><rect x="1002" y="387" width="2" height="19" fill="#40e090"/><rect x="1688" y="387" width="1" height="19" fill="#50d898"/>
<rect x="407" y="410" width="1348" height="19" fill="#a8f4a4"/>
<path d="M407 433.5H423.5V438L424.5 442.5" stroke="#c4f0bc" fill="none"/><path d="M407 451.5H423.5V447L424.5 442.5" stroke="#c4f0bc" fill="none"/><path d="M424.5 442.5L425.5 438V433.5H480.5V438L481.5 442.5" stroke="#c4f0bc" fill="none"/><path d="M424.5 442.5L425.5 447V451.5H480.5V447L481.5 442.5" stroke="#c4f0bc" fill="none"/><text x="426" y="450" class="wl" textLength="24.54" lengthAdjust="spacingAndGlyphs">3FF</text><path d="M481.5 442.5L482.5 438V433.5H538.5V438L539.5 442.5" stroke="#c4f0bc" fill="none"/><path d="M481.5 442.5L482.5 447V451.5H538.5V447L539.5 442.5" stroke="#c4f0bc" fill="none"/><text x="483" y="450" class="wl" textLength="24.54" lengthAdjust="spacingAndGlyphs">1FF</text><path d="M539.5 442.5L540.5 438V433.5H596.5V438L597.5 442.5" stroke="#c4f0bc" fill="none"/><path d="M539.5 442.5L540.5 447V451.5H596.5V447L597.5 442.5" stroke="#c4f0bc" fill="none"/><text x="541" y="450" class="wl" textLength="24.54" lengthAdjust="spacingAndGlyphs">4FF</text><path d="M597.5 442.5L598.5 438V433.5H654.5V438L655.5 442.5" stroke="#c4f0bc" fill="none"/><path d="M597.5 442.5L598.5 447V451.5H654.5V447L655.5 442.5" stroke="#c4f0bc" fill="none"/><text x="599" y="450" class="wl" textLength="25.62" lengthAdjust="spacingAndGlyphs">27F</text><path d="M655.5 442.5L656.5 438V433.5H712.5V438L713.5 442.5" stroke="#c4f0bc" fill="none"/><path d="M655.5 442.5L656.5 447V451.5H712.5V447L713.5 442.5" stroke="#c4f0bc" fill="none"/><text x="657" y="450" class="wl" textLength="25.62" lengthAdjust="spacingAndGlyphs">53F</text><path d="M713.5 442.5L714.5 438V433.5H770.5V438L771.5 442.5" stroke="#c4f0bc" fill="none"/><path d="M713.5 442.5L714.5 447V451.5H770.5V447L771.5 442.5" stroke="#c4f0bc" fill="none"/><text x="715" y="450" class="wl" textLength="25.62" lengthAdjust="spacingAndGlyphs">29F</text><path d="M771.5 442.5L772.5 438V433.5H828.5V438L829.5 442.5" stroke="#c4f0bc" fill="none"/><path d="M771.5 442.5L772.5 447V451.5H828.5V447L829.5 442.5" stroke="#c4f0bc" fill="none"/><text x="773" y="450" class="wl" textLength="25.62" lengthAdjust="spacingAndGlyphs">54F</text><path d="M829.5 442.5L830.5 438V433.5H886.5V438L887.5 442.5" stroke="#c4f0bc" fill="none"/><path d="M829.5 442.5L830.5 447V451.5H886.5V447L887.5 442.5" stroke="#c4f0bc" fill="none"/><text x="831" y="450" class="wl" textLength="27.29" lengthAdjust="spacingAndGlyphs">2A7</text><path d="M887.5 442.5L888.5 438V433.5H944.5V438L945.5 442.5" stroke="#c4f0bc" fill="none"/><path d="M887.5 442.5L888.5 447V451.5H944.5V447L945.5 442.5" stroke="#c4f0bc" fill="none"/><text x="889" y="450" class="wl" textLength="26.70" lengthAdjust="spacingAndGlyphs">553</text><path d="M945.5 442.5L946.5 438V433.5H1001.5V438L1002.5 442.5" stroke="#c4f0bc" fill="none"/><path d="M945.5 442.5L946.5 447V451.5H1001.5V447L1002.5 442.5" stroke="#c4f0bc" fill="none"/><text x="947" y="450" class="wl" textLength="27.29" lengthAdjust="spacingAndGlyphs">6A9</text><path d="M1002.5 442.5L1003.5 438V433.5H1108.5V438L1109.5 442.5" stroke="#c4f0bc" fill="none"/><path d="M1002.5 442.5L1003.5 447V451.5H1108.5V447L1109.5 442.5" stroke="#c4f0bc" fill="none"/><text x="1004" y="450" class="wl" textLength="24.54" lengthAdjust="spacingAndGlyphs">7FF</text><path d="M1109.5 442.5L1110.5 438V433.5H1166.5V438L1167.5 442.5" stroke="#c4f0bc" fill="none"/><path d="M1109.5 442.5L1110.5 447V451.5H1166.5V447L1167.5 442.5" stroke="#c4f0bc" fill="none"/><text x="1111" y="450" class="wl" textLength="24.54" lengthAdjust="spacingAndGlyphs">3FF</text><path d="M1167.5 442.5L1168.5 438V433.5H1224.5V438L1225.5 442.5" stroke="#c4f0bc" fill="none"/><path d="M1167.5 442.5L1168.5 447V451.5H1224.5V447L1225.5 442.5" stroke="#c4f0bc" fill="none"/><text x="1169" y="450" class="wl" textLength="24.54" lengthAdjust="spacingAndGlyphs">5FF</text><path d="M1225.5 442.5L1226.5 438V433.5H1282.5V438L1283.5 442.5" stroke="#c4f0bc" fill="none"/><path d="M1225.5 442.5L1226.5 447V451.5H1282.5V447L1283.5 442.5" stroke="#c4f0bc" fill="none"/><text x="1227" y="450" class="wl" textLength="24.54" lengthAdjust="spacingAndGlyphs">2FF</text><path d="M1283.5 442.5L1284.5 438V433.5H1340.5V438L1341.5 442.5" stroke="#c4f0bc" fill="none"/><path d="M1283.5 442.5L1284.5 447V451.5H1340.5V447L1341.5 442.5" stroke="#c4f0bc" fill="none"/><text x="1285" y="450" class="wl" textLength="25.62" lengthAdjust="spacingAndGlyphs">57F</text><path d="M1341.5 442.5L1342.5 438V433.5H1397.5V438L1398.5 442.5" stroke="#c4f0bc" fill="none"/><path d="M1341.5 442.5L1342.5 447V451.5H1397.5V447L1398.5 442.5" stroke="#c4f0bc" fill="none"/><text x="1343" y="450" class="wl" textLength="26.22" lengthAdjust="spacingAndGlyphs">2BF</text><path d="M1398.5 442.5L1399.5 438V433.5H1455.5V438L1456.5 442.5" stroke="#c4f0bc" fill="none"/><path d="M1398.5 442.5L1399.5 447V451.5H1455.5V447L1456.5 442.5" stroke="#c4f0bc" fill="none"/><text x="1400" y="450" class="wl" textLength="25.62" lengthAdjust="spacingAndGlyphs">55F</text><path d="M1456.5 442.5L1457.5 438V433.5H1513.5V438L1514.5 442.5" stroke="#c4f0bc" fill="none"/><path d="M1456.5 442.5L1457.5 447V451.5H1513.5V447L1514.5 442.5" stroke="#c4f0bc" fill="none"/><text x="1458" y="450" class="wl" textLength="26.22" lengthAdjust="spacingAndGlyphs">2AF</text><path d="M1514.5 442.5L1515.5 438V433.5H1571.5V438L1572.5 442.5" stroke="#c4f0bc" fill="none"/><path d="M1514.5 442.5L1515.5 447V451.5H1571.5V447L1572.5 442.5" stroke="#c4f0bc" fill="none"/><text x="1516" y="450" class="wl" textLength="26.70" lengthAdjust="spacingAndGlyphs">557</text><path d="M1572.5 442.5L1573.5 438V433.5H1629.5V438L1630.5 442.5" stroke="#c4f0bc" fill="none"/><path d="M1572.5 442.5L1573.5 447V451.5H1629.5V447L1630.5 442.5" stroke="#c4f0bc" fill="none"/><text x="1574" y="450" class="wl" textLength="27.89" lengthAdjust="spacingAndGlyphs">2AB</text><path d="M1630.5 442.5L1631.5 438V433.5H1687.5V438L1688.5 442.5" stroke="#c4f0bc" fill="none"/><path d="M1630.5 442.5L1631.5 447V451.5H1687.5V447L1688.5 442.5" stroke="#c4f0bc" fill="none"/><text x="1632" y="450" class="wl" textLength="26.70" lengthAdjust="spacingAndGlyphs">555</text><path d="M1688.5 442.5L1689.5 438V433.5H1755" stroke="#c4f0bc" fill="none"/><path d="M1688.5 442.5L1689.5 447V451.5H1755" stroke="#c4f0bc" fill="none"/><text x="1690" y="450" class="wl" textLength="24.54" lengthAdjust="spacingAndGlyphs">7FF</text>
<path d="M407 456.5H408.5V461L409.5 465.5" stroke="#c4f0bc" fill="none"/><path d="M407 474.5H408.5V470L409.5 465.5" stroke="#c4f0bc" fill="none"/><path d="M409.5 465.5L410.5 461V456.5H524.5V461L525.5 465.5" stroke="#c4f0bc" fill="none"/><path d="M409.5 465.5L410.5 470V474.5H524.5V470L525.5 465.5" stroke="#c4f0bc" fill="none"/><text x="411" y="473" class="wl" textLength="35.59" lengthAdjust="spacingAndGlyphs">0000</text><path d="M525.5 465.5L526.5 461V456.5H582.5V461L583.5 465.5" stroke="#c4f0bc" fill="none"/><path d="M525.5 465.5L526.5 470V474.5H582.5V470L583.5 465.5" stroke="#c4f0bc" fill="none"/><text x="527" y="473" class="wl" textLength="35.59" lengthAdjust="spacingAndGlyphs">1111</text><path d="M583.5 465.5L584.5 461V456.5H639.5V461L640.5 465.5" stroke="#c4f0bc" fill="none"/><path d="M583.5 465.5L584.5 470V474.5H639.5V470L640.5 465.5" stroke="#c4f0bc" fill="none"/><text x="585" y="473" class="wl" textLength="35.59" lengthAdjust="spacingAndGlyphs">0000</text><path d="M640.5 465.5L641.5 461V456.5H697.5V461L698.5 465.5" stroke="#c4f0bc" fill="none"/><path d="M640.5 465.5L641.5 470V474.5H697.5V470L698.5 465.5" stroke="#c4f0bc" fill="none"/><text x="642" y="473" class="wl" textLength="35.59" lengthAdjust="spacingAndGlyphs">1111</text><path d="M698.5 465.5L699.5 461V456.5H755.5V461L756.5 465.5" stroke="#c4f0bc" fill="none"/><path d="M698.5 465.5L699.5 470V474.5H755.5V470L756.5 465.5" stroke="#c4f0bc" fill="none"/><text x="700" y="473" class="wl" textLength="35.59" lengthAdjust="spacingAndGlyphs">0000</text><path d="M756.5 465.5L757.5 461V456.5H813.5V461L814.5 465.5" stroke="#c4f0bc" fill="none"/><path d="M756.5 465.5L757.5 470V474.5H813.5V470L814.5 465.5" stroke="#c4f0bc" fill="none"/><text x="758" y="473" class="wl" textLength="35.59" lengthAdjust="spacingAndGlyphs">1111</text><path d="M814.5 465.5L815.5 461V456.5H871.5V461L872.5 465.5" stroke="#c4f0bc" fill="none"/><path d="M814.5 465.5L815.5 470V474.5H871.5V470L872.5 465.5" stroke="#c4f0bc" fill="none"/><text x="816" y="473" class="wl" textLength="35.59" lengthAdjust="spacingAndGlyphs">0000</text><path d="M872.5 465.5L873.5 461V456.5H1094.5V461L1095.5 465.5" stroke="#c4f0bc" fill="none"/><path d="M872.5 465.5L873.5 470V474.5H1094.5V470L1095.5 465.5" stroke="#c4f0bc" fill="none"/><text x="874" y="473" class="wl" textLength="35.59" lengthAdjust="spacingAndGlyphs">1111</text><path d="M1095.5 465.5L1096.5 461V456.5H1152.5V461L1153.5 465.5" stroke="#c4f0bc" fill="none"/><path d="M1095.5 465.5L1096.5 470V474.5H1152.5V470L1153.5 465.5" stroke="#c4f0bc" fill="none"/><text x="1097" y="473" class="wl" textLength="35.59" lengthAdjust="spacingAndGlyphs">0000</text><path d="M1153.5 465.5L1154.5 461V456.5H1209.5V461L1210.5 465.5" stroke="#c4f0bc" fill="none"/><path d="M1153.5 465.5L1154.5 470V474.5H1209.5V470L1210.5 465.5" stroke="#c4f0bc" fill="none"/><text x="1155" y="473" class="wl" textLength="35.59" lengthAdjust="spacingAndGlyphs">1111</text><path d="M1210.5 465.5L1211.5 461V456.5H1267.5V461L1268.5 465.5" stroke="#c4f0bc" fill="none"/><path d="M1210.5 465.5L1211.5 470V474.5H1267.5V470L1268.5 465.5" stroke="#c4f0bc" fill="none"/><text x="1212" y="473" class="wl" textLength="35.59" lengthAdjust="spacingAndGlyphs">0000</text><path d="M1268.5 465.5L1269.5 461V456.5H1325.5V461L1326.5 465.5" stroke="#c4f0bc" fill="none"/><path d="M1268.5 465.5L1269.5 470V474.5H1325.5V470L1326.5 465.5" stroke="#c4f0bc" fill="none"/><text x="1270" y="473" class="wl" textLength="35.59" lengthAdjust="spacingAndGlyphs">1111</text><path d="M1326.5 465.5L1327.5 461V456.5H1383.5V461L1384.5 465.5" stroke="#c4f0bc" fill="none"/><path d="M1326.5 465.5L1327.5 470V474.5H1383.5V470L1384.5 465.5" stroke="#c4f0bc" fill="none"/><text x="1328" y="473" class="wl" textLength="35.59" lengthAdjust="spacingAndGlyphs">0000</text><path d="M1384.5 465.5L1385.5 461V456.5H1441.5V461L1442.5 465.5" stroke="#c4f0bc" fill="none"/><path d="M1384.5 465.5L1385.5 470V474.5H1441.5V470L1442.5 465.5" stroke="#c4f0bc" fill="none"/><text x="1386" y="473" class="wl" textLength="35.59" lengthAdjust="spacingAndGlyphs">1111</text><path d="M1442.5 465.5L1443.5 461V456.5H1499.5V461L1500.5 465.5" stroke="#c4f0bc" fill="none"/><path d="M1442.5 465.5L1443.5 470V474.5H1499.5V470L1500.5 465.5" stroke="#c4f0bc" fill="none"/><text x="1444" y="473" class="wl" textLength="35.59" lengthAdjust="spacingAndGlyphs">0000</text><path d="M1500.5 465.5L1501.5 461V456.5H1557.5V461L1558.5 465.5" stroke="#c4f0bc" fill="none"/><path d="M1500.5 465.5L1501.5 470V474.5H1557.5V470L1558.5 465.5" stroke="#c4f0bc" fill="none"/><text x="1502" y="473" class="wl" textLength="35.59" lengthAdjust="spacingAndGlyphs">1111</text><path d="M1558.5 465.5L1559.5 461V456.5H1614.5V461L1615.5 465.5" stroke="#c4f0bc" fill="none"/><path d="M1558.5 465.5L1559.5 470V474.5H1614.5V470L1615.5 465.5" stroke="#c4f0bc" fill="none"/><text x="1560" y="473" class="wl" textLength="35.59" lengthAdjust="spacingAndGlyphs">0000</text><path d="M1615.5 465.5L1616.5 461V456.5H1755" stroke="#c4f0bc" fill="none"/><path d="M1615.5 465.5L1616.5 470V474.5H1755" stroke="#c4f0bc" fill="none"/><text x="1617" y="473" class="wl" textLength="35.59" lengthAdjust="spacingAndGlyphs">1111</text>
<path d="M407 479.5H423.5V484L424.5 488.5" stroke="#c4f0bc" fill="none"/><path d="M407 497.5H423.5V493L424.5 488.5" stroke="#c4f0bc" fill="none"/><path d="M424.5 488.5L425.5 484V479.5H452.5V484L453.5 488.5" stroke="#c4f0bc" fill="none"/><path d="M424.5 488.5L425.5 493V497.5H452.5V493L453.5 488.5" stroke="#c4f0bc" fill="none"/><text x="426" y="496" class="wl" textLength="22.23" lengthAdjust="spacingAndGlyphs">0...</text><path d="M453.5 488.5L454.5 484V479.5H480.5V484L481.5 488.5" stroke="#c4f0bc" fill="none"/><path d="M453.5 488.5L454.5 493V497.5H480.5V493L481.5 488.5" stroke="#c4f0bc" fill="none"/><text x="455" y="496" class="wl" textLength="22.23" lengthAdjust="spacingAndGlyphs">1...</text><path d="M481.5 488.5L482.5 484V479.5H509.5V484L510.5 488.5" stroke="#c4f0bc" fill="none"/><path d="M481.5 488.5L482.5 493V497.5H509.5V493L510.5 488.5" stroke="#c4f0bc" fill="none"/><text x="483" y="496" class="wl" textLength="22.23" lengthAdjust="spacingAndGlyphs">0...</text><path d="M510.5 488.5L511.5 484V479.5H538.5V484L539.5 488.5" stroke="#c4f0bc" fill="none"/><path d="M510.5 488.5L511.5 493V497.5H538.5V493L539.5 488.5" stroke="#c4f0bc" fill="none"/><text x="512" y="496" class="wl" textLength="22.23" lengthAdjust="spacingAndGlyphs">1...</text><path d="M539.5 488.5L540.5 484V479.5H567.5V484L568.5 488.5" stroke="#c4f0bc" fill="none"/><path d="M539.5 488.5L540.5 493V497.5H567.5V493L568.5 488.5" stroke="#c4f0bc" fill="none"/><text x="541" y="496" class="wl" textLength="22.23" lengthAdjust="spacingAndGlyphs">0...</text><path d="M568.5 488.5L569.5 484V479.5H596.5V484L597.5 488.5" stroke="#c4f0bc" fill="none"/><path d="M568.5 488.5L569.5 493V497.5H596.5V493L597.5 488.5" stroke="#c4f0bc" fill="none"/><text x="570" y="496" class="wl" textLength="22.23" lengthAdjust="spacingAndGlyphs">1...</text><path d="M597.5 488.5L598.5 484V479.5H625.5V484L626.5 488.5" stroke="#c4f0bc" fill="none"/><path d="M597.5 488.5L598.5 493V497.5H625.5V493L626.5 488.5" stroke="#c4f0bc" fill="none"/><text x="599" y="496" class="wl" textLength="22.23" lengthAdjust="spacingAndGlyphs">0...</text><path d="M626.5 488.5L627.5 484V479.5H654.5V484L655.5 488.5" stroke="#c4f0bc" fill="none"/><path d="M626.5 488.5L627.5 493V497.5H654.5V493L655.5 488.5" stroke="#c4f0bc" fill="none"/><text x="628" y="496" class="wl" textLength="22.23" lengthAdjust="spacingAndGlyphs">1...</text><path d="M655.5 488.5L656.5 484V479.5H683.5V484L684.5 488.5" stroke="#c4f0bc" fill="none"/><path d="M655.5 488.5L656.5 493V497.5H683.5V493L684.5 488.5" stroke="#c4f0bc" fill="none"/><text x="657" y="496" class="wl" textLength="22.23" lengthAdjust="spacingAndGlyphs">0...</text><path d="M684.5 488.5L685.5 484V479.5H712.5V484L713.5 488.5" stroke="#c4f0bc" fill="none"/><path d="M684.5 488.5L685.5 493V497.5H712.5V493L713.5 488.5" stroke="#c4f0bc" fill="none"/><text x="686" y="496" class="wl" textLength="22.23" lengthAdjust="spacingAndGlyphs">1...</text><path d="M713.5 488.5L714.5 484V479.5H741.5V484L742.5 488.5" stroke="#c4f0bc" fill="none"/><path d="M713.5 488.5L714.5 493V497.5H741.5V493L742.5 488.5" stroke="#c4f0bc" fill="none"/><text x="715" y="496" class="wl" textLength="22.23" lengthAdjust="spacingAndGlyphs">0...</text><path d="M742.5 488.5L743.5 484V479.5H769.5V484L770.5 488.5" stroke="#c4f0bc" fill="none"/><path d="M742.5 488.5L743.5 493V497.5H769.5V493L770.5 488.5" stroke="#c4f0bc" fill="none"/><text x="744" y="496" class="wl" textLength="22.23" lengthAdjust="spacingAndGlyphs">1...</text><path d="M770.5 488.5L771.5 484V479.5H798.5V484L799.5 488.5" stroke="#c4f0bc" fill="none"/><path d="M770.5 488.5L771.5 493V497.5H798.5V493L799.5 488.5" stroke="#c4f0bc" fill="none"/><text x="772" y="496" class="wl" textLength="22.23" lengthAdjust="spacingAndGlyphs">0...</text><path d="M799.5 488.5L800.5 484V479.5H827.5V484L828.5 488.5" stroke="#c4f0bc" fill="none"/><path d="M799.5 488.5L800.5 493V497.5H827.5V493L828.5 488.5" stroke="#c4f0bc" fill="none"/><text x="801" y="496" class="wl" textLength="22.23" lengthAdjust="spacingAndGlyphs">1...</text><path d="M828.5 488.5L829.5 484V479.5H856.5V484L857.5 488.5" stroke="#c4f0bc" fill="none"/><path d="M828.5 488.5L829.5 493V497.5H856.5V493L857.5 488.5" stroke="#c4f0bc" fill="none"/><text x="830" y="496" class="wl" textLength="22.23" lengthAdjust="spacingAndGlyphs">0...</text><path d="M857.5 488.5L858.5 484V479.5H885.5V484L886.5 488.5" stroke="#c4f0bc" fill="none"/><path d="M857.5 488.5L858.5 493V497.5H885.5V493L886.5 488.5" stroke="#c4f0bc" fill="none"/><text x="859" y="496" class="wl" textLength="22.23" lengthAdjust="spacingAndGlyphs">1...</text><path d="M886.5 488.5L887.5 484V479.5H914.5V484L915.5 488.5" stroke="#c4f0bc" fill="none"/><path d="M886.5 488.5L887.5 493V497.5H914.5V493L915.5 488.5" stroke="#c4f0bc" fill="none"/><text x="888" y="496" class="wl" textLength="22.23" lengthAdjust="spacingAndGlyphs">0...</text><path d="M915.5 488.5L916.5 484V479.5H942.5V484L943.5 488.5" stroke="#c4f0bc" fill="none"/><path d="M915.5 488.5L916.5 493V497.5H942.5V493L943.5 488.5" stroke="#c4f0bc" fill="none"/><text x="917" y="496" class="wl" textLength="22.23" lengthAdjust="spacingAndGlyphs">1...</text><path d="M943.5 488.5L944.5 484V479.5H971.5V484L972.5 488.5" stroke="#c4f0bc" fill="none"/><path d="M943.5 488.5L944.5 493V497.5H971.5V493L972.5 488.5" stroke="#c4f0bc" fill="none"/><text x="945" y="496" class="wl" textLength="22.23" lengthAdjust="spacingAndGlyphs">0...</text><path d="M972.5 488.5L973.5 484V479.5H1000.5V484L1001.5 488.5" stroke="#c4f0bc" fill="none"/><path d="M972.5 488.5L973.5 493V497.5H1000.5V493L1001.5 488.5" stroke="#c4f0bc" fill="none"/><text x="974" y="496" class="wl" textLength="22.23" lengthAdjust="spacingAndGlyphs">1...</text><path d="M1001.5 488.5L1002.5 484V479.5H1003.5V484L1004.5 488.5" stroke="#c4f0bc" fill="none"/><path d="M1001.5 488.5L1002.5 493V497.5H1003.5V493L1004.5 488.5" stroke="#c4f0bc" fill="none"/><path d="M1004.5 488.5L1005.5 484V479.5H1108.5V484L1109.5 488.5" stroke="#c4f0bc" fill="none"/><path d="M1004.5 488.5L1005.5 493V497.5H1108.5V493L1109.5 488.5" stroke="#c4f0bc" fill="none"/><text x="1006" y="496" class="wl" textLength="35.59" lengthAdjust="spacingAndGlyphs">1111</text><path d="M1109.5 488.5L1110.5 484V479.5H1137.5V484L1138.5 488.5" stroke="#c4f0bc" fill="none"/><path d="M1109.5 488.5L1110.5 493V497.5H1137.5V493L1138.5 488.5" stroke="#c4f0bc" fill="none"/><text x="1111" y="496" class="wl" textLength="22.23" lengthAdjust="spacingAndGlyphs">0...</text><path d="M1138.5 488.5L1139.5 484V479.5H1166.5V484L1167.5 488.5" stroke="#c4f0bc" fill="none"/><path d="M1138.5 488.5L1139.5 493V497.5H1166.5V493L1167.5 488.5" stroke="#c4f0bc" fill="none"/><text x="1140" y="496" class="wl" textLength="22.23" lengthAdjust="spacingAndGlyphs">1...</text><path d="M1167.5 488.5L1168.5 484V479.5H1195.5V484L1196.5 488.5" stroke="#c4f0bc" fill="none"/><path d="M1167.5 488.5L1168.5 493V497.5H1195.5V493L1196.5 488.5" stroke="#c4f0bc" fill="none"/><text x="1169" y="496" class="wl" textLength="22.23" lengthAdjust="spacingAndGlyphs">0...</text><path d="M1196.5 488.5L1197.5 484V479.5H1224.5V484L1225.5 488.5" stroke="#c4f0bc" fill="none"/><path d="M1196.5 488.5L1197.5 493V497.5H1224.5V493L1225.5 488.5" stroke="#c4f0bc" fill="none"/><text x="1198" y="496" class="wl" textLength="22.23" lengthAdjust="spacingAndGlyphs">1...</text><path d="M1225.5 488.5L1226.5 484V479.5H1253.5V484L1254.5 488.5" stroke="#c4f0bc" fill="none"/><path d="M1225.5 488.5L1226.5 493V497.5H1253.5V493L1254.5 488.5" stroke="#c4f0bc" fill="none"/><text x="1227" y="496" class="wl" textLength="22.23" lengthAdjust="spacingAndGlyphs">0...</text><path d="M1254.5 488.5L1255.5 484V479.5H1282.5V484L1283.5 488.5" stroke="#c4f0bc" fill="none"/><path d="M1254.5 488.5L1255.5 493V497.5H1282.5V493L1283.5 488.5" stroke="#c4f0bc" fill="none"/><text x="1256" y="496" class="wl" textLength="22.23" lengthAdjust="spacingAndGlyphs">1...</text><path d="M1283.5 488.5L1284.5 484V479.5H1311.5V484L1312.5 488.5" stroke="#c4f0bc" fill="none"/><path d="M1283.5 488.5L1284.5 493V497.5H1311.5V493L1312.5 488.5" stroke="#c4f0bc" fill="none"/><text x="1285" y="496" class="wl" textLength="22.23" lengthAdjust="spacingAndGlyphs">0...</text><path d="M1312.5 488.5L1313.5 484V479.5H1340.5V484L1341.5 488.5" stroke="#c4f0bc" fill="none"/><path d="M1312.5 488.5L1313.5 493V497.5H1340.5V493L1341.5 488.5" stroke="#c4f0bc" fill="none"/><text x="1314" y="496" class="wl" textLength="22.23" lengthAdjust="spacingAndGlyphs">1...</text><path d="M1341.5 488.5L1342.5 484V479.5H1368.5V484L1369.5 488.5" stroke="#c4f0bc" fill="none"/><path d="M1341.5 488.5L1342.5 493V497.5H1368.5V493L1369.5 488.5" stroke="#c4f0bc" fill="none"/><text x="1343" y="496" class="wl" textLength="22.23" lengthAdjust="spacingAndGlyphs">0...</text><path d="M1369.5 488.5L1370.5 484V479.5H1397.5V484L1398.5 488.5" stroke="#c4f0bc" fill="none"/><path d="M1369.5 488.5L1370.5 493V497.5H1397.5V493L1398.5 488.5" stroke="#c4f0bc" fill="none"/><text x="1371" y="496" class="wl" textLength="22.23" lengthAdjust="spacingAndGlyphs">1...</text><path d="M1398.5 488.5L1399.5 484V479.5H1426.5V484L1427.5 488.5" stroke="#c4f0bc" fill="none"/><path d="M1398.5 488.5L1399.5 493V497.5H1426.5V493L1427.5 488.5" stroke="#c4f0bc" fill="none"/><text x="1400" y="496" class="wl" textLength="22.23" lengthAdjust="spacingAndGlyphs">0...</text><path d="M1427.5 488.5L1428.5 484V479.5H1455.5V484L1456.5 488.5" stroke="#c4f0bc" fill="none"/><path d="M1427.5 488.5L1428.5 493V497.5H1455.5V493L1456.5 488.5" stroke="#c4f0bc" fill="none"/><text x="1429" y="496" class="wl" textLength="22.23" lengthAdjust="spacingAndGlyphs">1...</text><path d="M1456.5 488.5L1457.5 484V479.5H1484.5V484L1485.5 488.5" stroke="#c4f0bc" fill="none"/><path d="M1456.5 488.5L1457.5 493V497.5H1484.5V493L1485.5 488.5" stroke="#c4f0bc" fill="none"/><text x="1458" y="496" class="wl" textLength="22.23" lengthAdjust="spacingAndGlyphs">0...</text><path d="M1485.5 488.5L1486.5 484V479.5H1513.5V484L1514.5 488.5" stroke="#c4f0bc" fill="none"/><path d="M1485.5 488.5L1486.5 493V497.5H1513.5V493L1514.5 488.5" stroke="#c4f0bc" fill="none"/><text x="1487" y="496" class="wl" textLength="22.23" lengthAdjust="spacingAndGlyphs">1...</text><path d="M1514.5 488.5L1515.5 484V479.5H1542.5V484L1543.5 488.5" stroke="#c4f0bc" fill="none"/><path d="M1514.5 488.5L1515.5 493V497.5H1542.5V493L1543.5 488.5" stroke="#c4f0bc" fill="none"/><text x="1516" y="496" class="wl" textLength="22.23" lengthAdjust="spacingAndGlyphs">0...</text><path d="M1543.5 488.5L1544.5 484V479.5H1571.5V484L1572.5 488.5" stroke="#c4f0bc" fill="none"/><path d="M1543.5 488.5L1544.5 493V497.5H1571.5V493L1572.5 488.5" stroke="#c4f0bc" fill="none"/><text x="1545" y="496" class="wl" textLength="22.23" lengthAdjust="spacingAndGlyphs">1...</text><path d="M1572.5 488.5L1573.5 484V479.5H1600.5V484L1601.5 488.5" stroke="#c4f0bc" fill="none"/><path d="M1572.5 488.5L1573.5 493V497.5H1600.5V493L1601.5 488.5" stroke="#c4f0bc" fill="none"/><text x="1574" y="496" class="wl" textLength="22.23" lengthAdjust="spacingAndGlyphs">0...</text><path d="M1601.5 488.5L1602.5 484V479.5H1629.5V484L1630.5 488.5" stroke="#c4f0bc" fill="none"/><path d="M1601.5 488.5L1602.5 493V497.5H1629.5V493L1630.5 488.5" stroke="#c4f0bc" fill="none"/><text x="1603" y="496" class="wl" textLength="22.23" lengthAdjust="spacingAndGlyphs">1...</text><path d="M1630.5 488.5L1631.5 484V479.5H1658.5V484L1659.5 488.5" stroke="#c4f0bc" fill="none"/><path d="M1630.5 488.5L1631.5 493V497.5H1658.5V493L1659.5 488.5" stroke="#c4f0bc" fill="none"/><text x="1632" y="496" class="wl" textLength="22.23" lengthAdjust="spacingAndGlyphs">0...</text><path d="M1659.5 488.5L1660.5 484V479.5H1687.5V484L1688.5 488.5" stroke="#c4f0bc" fill="none"/><path d="M1659.5 488.5L1660.5 493V497.5H1687.5V493L1688.5 488.5" stroke="#c4f0bc" fill="none"/><text x="1661" y="496" class="wl" textLength="22.23" lengthAdjust="spacingAndGlyphs">1...</text><path d="M1688.5 488.5L1689.5 484V479.5H1690.5V484L1691.5 488.5" stroke="#c4f0bc" fill="none"/><path d="M1688.5 488.5L1689.5 493V497.5H1690.5V493L1691.5 488.5" stroke="#c4f0bc" fill="none"/><path d="M1691.5 488.5L1692.5 484V479.5H1755" stroke="#c4f0bc" fill="none"/><path d="M1691.5 488.5L1692.5 493V497.5H1755" stroke="#c4f0bc" fill="none"/><text x="1693" y="496" class="wl" textLength="35.59" lengthAdjust="spacingAndGlyphs">1111</text>
<path d="M407 502.5H424.5V520.5H453.5V502.5H481.5V520.5H510.5V502.5H539.5V520.5H568.5V502.5H597.5V520.5H626.5V502.5H655.5V520.5H684.5V502.5H713.5V520.5H742.5V502.5H770.5V520.5H799.5V502.5H828.5V520.5H857.5V502.5H886.5V520.5H915.5V502.5H943.5V520.5H972.5V502.5H1001.5V520.5H1005.5V502.5H1109.5V520.5H1138.5V502.5H1167.5V520.5H1196.5V502.5H1225.5V520.5H1254.5V502.5H1283.5V520.5H1312.5V502.5H1341.5V520.5H1369.5V502.5H1398.5V520.5H1427.5V502.5H1456.5V520.5H1485.5V502.5H1514.5V520.5H1543.5V502.5H1572.5V520.5H1601.5V502.5H1630.5V520.5H1659.5V502.5H1688.5V520.5H1690.5V502.5H1755" stroke="#58d898" fill="none" stroke-width="1"/>
<path d="M407 525.5H409.5V543.5H525.5V525.5H583.5V543.5H640.5V525.5H698.5V543.5H756.5V525.5H814.5V543.5H872.5V525.5H1095.5V543.5H1153.5V525.5H1210.5V543.5H1268.5V525.5H1326.5V543.5H1384.5V525.5H1442.5V543.5H1500.5V525.5H1558.5V543.5H1615.5V525.5H1755" stroke="#58d898" fill="none" stroke-width="1"/>
<path d="M407 548.5H408.5V553L409.5 557.5" stroke="#c4f0bc" fill="none"/><path d="M407 566.5H408.5V562L409.5 557.5" stroke="#c4f0bc" fill="none"/><path d="M409.5 557.5L410.5 553V548.5H1001.5V553L1002.5 557.5" stroke="#c4f0bc" fill="none"/><path d="M409.5 557.5L410.5 562V566.5H1001.5V562L1002.5 557.5" stroke="#c4f0bc" fill="none"/><text x="411" y="565" class="wl" textLength="62.52" lengthAdjust="spacingAndGlyphs">RECEIVE</text><path d="M1002.5 557.5L1003.5 553V548.5H1094.5V553L1095.5 557.5" stroke="#c4f0bc" fill="none"/><path d="M1002.5 557.5L1003.5 562V566.5H1094.5V562L1095.5 557.5" stroke="#c4f0bc" fill="none"/><text x="1004" y="565" class="wl" textLength="31.66" lengthAdjust="spacingAndGlyphs">IDLE</text><path d="M1095.5 557.5L1096.5 553V548.5H1687.5V553L1688.5 557.5" stroke="#c4f0bc" fill="none"/><path d="M1095.5 557.5L1096.5 562V566.5H1687.5V562L1688.5 557.5" stroke="#c4f0bc" fill="none"/><text x="1097" y="565" class="wl" textLength="62.52" lengthAdjust="spacingAndGlyphs">RECEIVE</text><path d="M1688.5 557.5L1689.5 553V548.5H1755" stroke="#c4f0bc" fill="none"/><path d="M1688.5 557.5L1689.5 562V566.5H1755" stroke="#c4f0bc" fill="none"/><text x="1690" y="565" class="wl" textLength="31.66" lengthAdjust="spacingAndGlyphs">IDLE</text>
<path d="M407 594.5H1001.5V599L1002.5 603.5" stroke="#e07a5c" fill="none"/><path d="M407 612.5H1001.5V608L1002.5 603.5" stroke="#e07a5c" fill="none"/><text x="409" y="611" class="wl" textLength="19.00" lengthAdjust="spacingAndGlyphs">XX</text><path d="M1002.5 603.5L1003.5 599V594.5H1687.5V599L1688.5 603.5" stroke="#c4f0bc" fill="none"/><path d="M1002.5 603.5L1003.5 608V612.5H1687.5V608L1688.5 603.5" stroke="#c4f0bc" fill="none"/><text x="1004" y="611" class="wl" textLength="19.00" lengthAdjust="spacingAndGlyphs">AA</text><path d="M1688.5 603.5L1689.5 599V594.5H1755" stroke="#c4f0bc" fill="none"/><path d="M1688.5 603.5L1689.5 608V612.5H1755" stroke="#c4f0bc" fill="none"/><text x="1690" y="611" class="wl" textLength="17.80" lengthAdjust="spacingAndGlyphs">55</text>
<path d="M407 635.5H409.5V617.5H1002.5V635.5H1095.5V617.5H1688.5V635.5H1755" stroke="#58d898" fill="none" stroke-width="1"/>
<path d="M407 649.5H1002.5V658.5H1755" stroke="#e07a5c" fill="none"/><path d="M1002.5 651V658.5H1755" stroke="#58d898" fill="none"/>
<path d="M407 672.5H1002.5V681.5H1755" stroke="#e07a5c" fill="none"/><path d="M1002.5 674V681.5H1755" stroke="#58d898" fill="none"/>
<path d="M407 704.5H1755" stroke="#58d898" stroke-width="1"/><rect x="1002" y="686" width="2" height="19" fill="#40e090"/><rect x="1688" y="686" width="1" height="19" fill="#50d898"/>
<path d="M550 727.5H1755" stroke="#58d898" stroke-width="1"/><rect x="1002" y="709" width="2" height="19" fill="#40e090"/><rect x="1688" y="709" width="1" height="19" fill="#50d898"/>
<path d="M550 750.5H1755" stroke="#58d898" stroke-width="1"/><rect x="1002" y="732" width="2" height="19" fill="#40e090"/><rect x="1688" y="732" width="1" height="19" fill="#50d898"/>
<path d="M407 773.5H1755" stroke="#58d898" stroke-width="1"/><rect x="1002" y="755" width="2" height="19" fill="#40e090"/><rect x="1688" y="755" width="1" height="19" fill="#50d898"/>
<path d="M588 778.5H1001.5V783L1002.5 787.5" stroke="#c4f0bc" fill="none"/><path d="M588 796.5H1001.5V792L1002.5 787.5" stroke="#c4f0bc" fill="none"/><text x="590" y="795" class="wl" textLength="71.19" lengthAdjust="spacingAndGlyphs">00000000</text><path d="M1002.5 787.5L1003.5 783V778.5H1687.5V783L1688.5 787.5" stroke="#c4f0bc" fill="none"/><path d="M1002.5 787.5L1003.5 792V796.5H1687.5V792L1688.5 787.5" stroke="#c4f0bc" fill="none"/><text x="1004" y="795" class="wl" textLength="72.39" lengthAdjust="spacingAndGlyphs">AA000000</text><path d="M1688.5 787.5L1689.5 783V778.5H1755" stroke="#c4f0bc" fill="none"/><path d="M1688.5 787.5L1689.5 792V796.5H1755" stroke="#c4f0bc" fill="none"/><text x="1690" y="795" class="wl" textLength="72.39" lengthAdjust="spacingAndGlyphs">55AA0000</text>
<rect x="481" y="479" width="2" height="19" fill="#a8f0a0"/><rect x="480" y="479" width="4" height="4" fill="#a8f0a0"/><rect x="480" y="494" width="4" height="4" fill="#a8f0a0"/>
<rect x="943" y="479" width="2" height="19" fill="#a8f0a0"/><rect x="942" y="479" width="4" height="4" fill="#a8f0a0"/><rect x="942" y="494" width="4" height="4" fill="#a8f0a0"/>
<rect x="1001" y="433" width="2" height="19" fill="#a8f0a0"/><rect x="1000" y="433" width="4" height="4" fill="#a8f0a0"/><rect x="1000" y="448" width="4" height="4" fill="#a8f0a0"/>
<rect x="1001" y="548" width="2" height="19" fill="#a8f0a0"/><rect x="1000" y="548" width="4" height="4" fill="#a8f0a0"/><rect x="1000" y="563" width="4" height="4" fill="#a8f0a0"/>
<rect x="1369" y="479" width="2" height="19" fill="#a8f0a0"/><rect x="1368" y="479" width="4" height="4" fill="#a8f0a0"/><rect x="1368" y="494" width="4" height="4" fill="#a8f0a0"/>
<rect x="1210" y="456" width="2" height="19" fill="#a8f0a0"/><rect x="1209" y="456" width="4" height="4" fill="#a8f0a0"/><rect x="1209" y="471" width="4" height="4" fill="#a8f0a0"/>
<rect x="1557" y="456" width="2" height="19" fill="#a8f0a0"/><rect x="1556" y="456" width="4" height="4" fill="#a8f0a0"/><rect x="1556" y="471" width="4" height="4" fill="#a8f0a0"/>
<rect x="405" y="0" width="2" height="838" fill="#fff0b8"/>
<rect x="0" y="805" width="403" height="1" fill="#404040"/>
<rect x="405" y="806" width="1350" height="2" fill="#ffffff"/>
<rect x="8" y="806" width="287" height="30" fill="#fdfdfb"/>
<rect x="298" y="806" width="105" height="30" fill="#fdfdfb"/>
<circle cx="2" cy="822" r="5.5" fill="#7ac47a" stroke="#3a8a3a" stroke-width="1" shape-rendering="auto"/>
<path d="M-1 822H5M2 819V825" stroke="#e8ffe8" stroke-width="2"/>
<text x="286" y="828" text-anchor="end" style="fill:#000">Now</text>
<text x="393.5" y="828" text-anchor="end" style="fill:#000">1900 us</text>
<rect x="435" y="811" width="1" height="4" fill="#30c030"/>
<rect x="464" y="811" width="1" height="4" fill="#30c030"/>
<rect x="493" y="811" width="1" height="4" fill="#30c030"/>
<rect x="521" y="811" width="1" height="4" fill="#30c030"/>
<rect x="550" y="808" width="1" height="7" fill="#30c030"/>
<rect x="579" y="811" width="1" height="4" fill="#30c030"/>
<rect x="608" y="811" width="1" height="4" fill="#30c030"/>
<rect x="637" y="811" width="1" height="4" fill="#30c030"/>
<rect x="666" y="811" width="1" height="4" fill="#30c030"/>
<rect x="695" y="808" width="1" height="7" fill="#30c030"/>
<rect x="724" y="811" width="1" height="4" fill="#30c030"/>
<rect x="753" y="811" width="1" height="4" fill="#30c030"/>
<rect x="781" y="811" width="1" height="4" fill="#30c030"/>
<rect x="810" y="811" width="1" height="4" fill="#30c030"/>
<rect x="839" y="808" width="1" height="7" fill="#30c030"/>
<rect x="868" y="811" width="1" height="4" fill="#30c030"/>
<rect x="897" y="811" width="1" height="4" fill="#30c030"/>
<rect x="926" y="811" width="1" height="4" fill="#30c030"/>
<rect x="955" y="811" width="1" height="4" fill="#30c030"/>
<rect x="984" y="808" width="1" height="7" fill="#30c030"/>
<rect x="1013" y="811" width="1" height="4" fill="#30c030"/>
<rect x="1041" y="811" width="1" height="4" fill="#30c030"/>
<rect x="1070" y="811" width="1" height="4" fill="#30c030"/>
<rect x="1099" y="811" width="1" height="4" fill="#30c030"/>
<rect x="1128" y="808" width="1" height="7" fill="#30c030"/>
<rect x="1157" y="811" width="1" height="4" fill="#30c030"/>
<rect x="1186" y="811" width="1" height="4" fill="#30c030"/>
<rect x="1215" y="811" width="1" height="4" fill="#30c030"/>
<rect x="1244" y="811" width="1" height="4" fill="#30c030"/>
<rect x="1273" y="808" width="1" height="7" fill="#30c030"/>
<rect x="1302" y="811" width="1" height="4" fill="#30c030"/>
<rect x="1330" y="811" width="1" height="4" fill="#30c030"/>
<rect x="1359" y="811" width="1" height="4" fill="#30c030"/>
<rect x="1388" y="811" width="1" height="4" fill="#30c030"/>
<rect x="1417" y="808" width="1" height="7" fill="#30c030"/>
<rect x="1446" y="811" width="1" height="4" fill="#30c030"/>
<rect x="1475" y="811" width="1" height="4" fill="#30c030"/>
<rect x="1504" y="811" width="1" height="4" fill="#30c030"/>
<rect x="1533" y="811" width="1" height="4" fill="#30c030"/>
<rect x="1562" y="808" width="1" height="7" fill="#30c030"/>
<rect x="1590" y="811" width="1" height="4" fill="#30c030"/>
<rect x="1619" y="811" width="1" height="4" fill="#30c030"/>
<rect x="1648" y="811" width="1" height="4" fill="#30c030"/>
<rect x="1677" y="811" width="1" height="4" fill="#30c030"/>
<rect x="1706" y="808" width="1" height="7" fill="#30c030"/>
<rect x="1735" y="811" width="1" height="4" fill="#30c030"/>
<text x="407.5" y="834" style="fill:#22e022">00 us</text>
<text x="695.29" y="834" text-anchor="middle" style="fill:#22e022">400 us</text>
<text x="984.21" y="834" text-anchor="middle" style="fill:#22e022">800 us</text>
<text x="1273.13" y="834" text-anchor="middle" style="fill:#22e022">1200 us</text>
<text x="1562.0500000000002" y="834" text-anchor="middle" style="fill:#22e022">1600 us</text>
<rect x="405" y="837" width="1350" height="1" fill="#a0a0a0"/>
<rect x="407" y="836" width="85" height="2" fill="#e8c860"/>
</svg></body></html>
